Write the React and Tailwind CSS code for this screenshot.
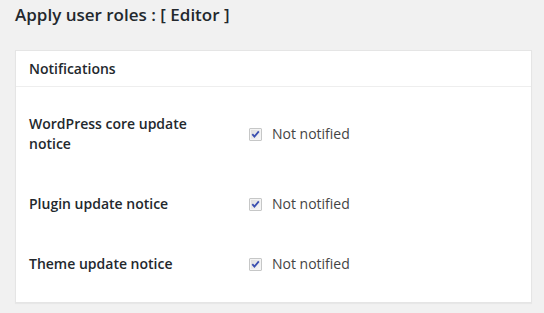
import React from 'react'

const rows = [
  { label: 'WordPress core update notice' },
  { label: 'Plugin update notice' },
  { label: 'Theme update notice' },
]

function Check() {
  return (
    <svg width="13" height="13" viewBox="0 0 13 13" className="shrink-0">
      <defs>
        <linearGradient id="cb" x1="0" y1="0" x2="1" y2="1">
          <stop offset="0" stopColor="#dcdcdc" />
          <stop offset="1" stopColor="#f7f7f7" />
        </linearGradient>
      </defs>
      <rect x="0.5" y="0.5" width="12" height="12" fill="#8e8f8f" />
      <rect x="1.5" y="1.5" width="10" height="10" fill="url(#cb)" stroke="#f4f4f4" strokeWidth="1" />
      <path d="M3.3 6.2 L5.4 8.6 L9.8 3.4" fill="none" stroke="#3a4fb0" strokeWidth="1.8" />
    </svg>
  )
}

export default function App() {
  return (
    <div
      className="min-h-screen w-[544px] h-[313px] overflow-hidden bg-[#f1f1f1] text-[#23282d]"
      style={{ fontFamily: '"Open Sans", sans-serif' }}
    >
      <h1 className="px-[15px] pt-[3px] text-[17px] leading-[23px] font-semibold">
        Apply user roles : [ Editor ]
      </h1>

      <div className="mt-[24px] ml-[15px] w-[517px] bg-white border border-[#e5e5e5] shadow-[0_1px_1px_rgba(0,0,0,0.04)]">
        <div className="h-[36px] flex items-center px-[13px] border-b border-[#eeeeee] text-[14px] font-semibold">
          Notifications
        </div>
        <div className="pt-[7px] pb-[8px] px-[13px]">
          {rows.map((r) => (
            <div key={r.label} className="flex items-center py-5">
              <div className="w-[220px] pr-[20px] text-[14px] leading-[20px] font-semibold">
                {r.label}
              </div>
              <label className="flex items-center gap-[10px] text-[14px] leading-[20px] text-[#444]">
                <Check />
                Not notified
              </label>
            </div>
          ))}
        </div>
      </div>
    </div>
  )
}
